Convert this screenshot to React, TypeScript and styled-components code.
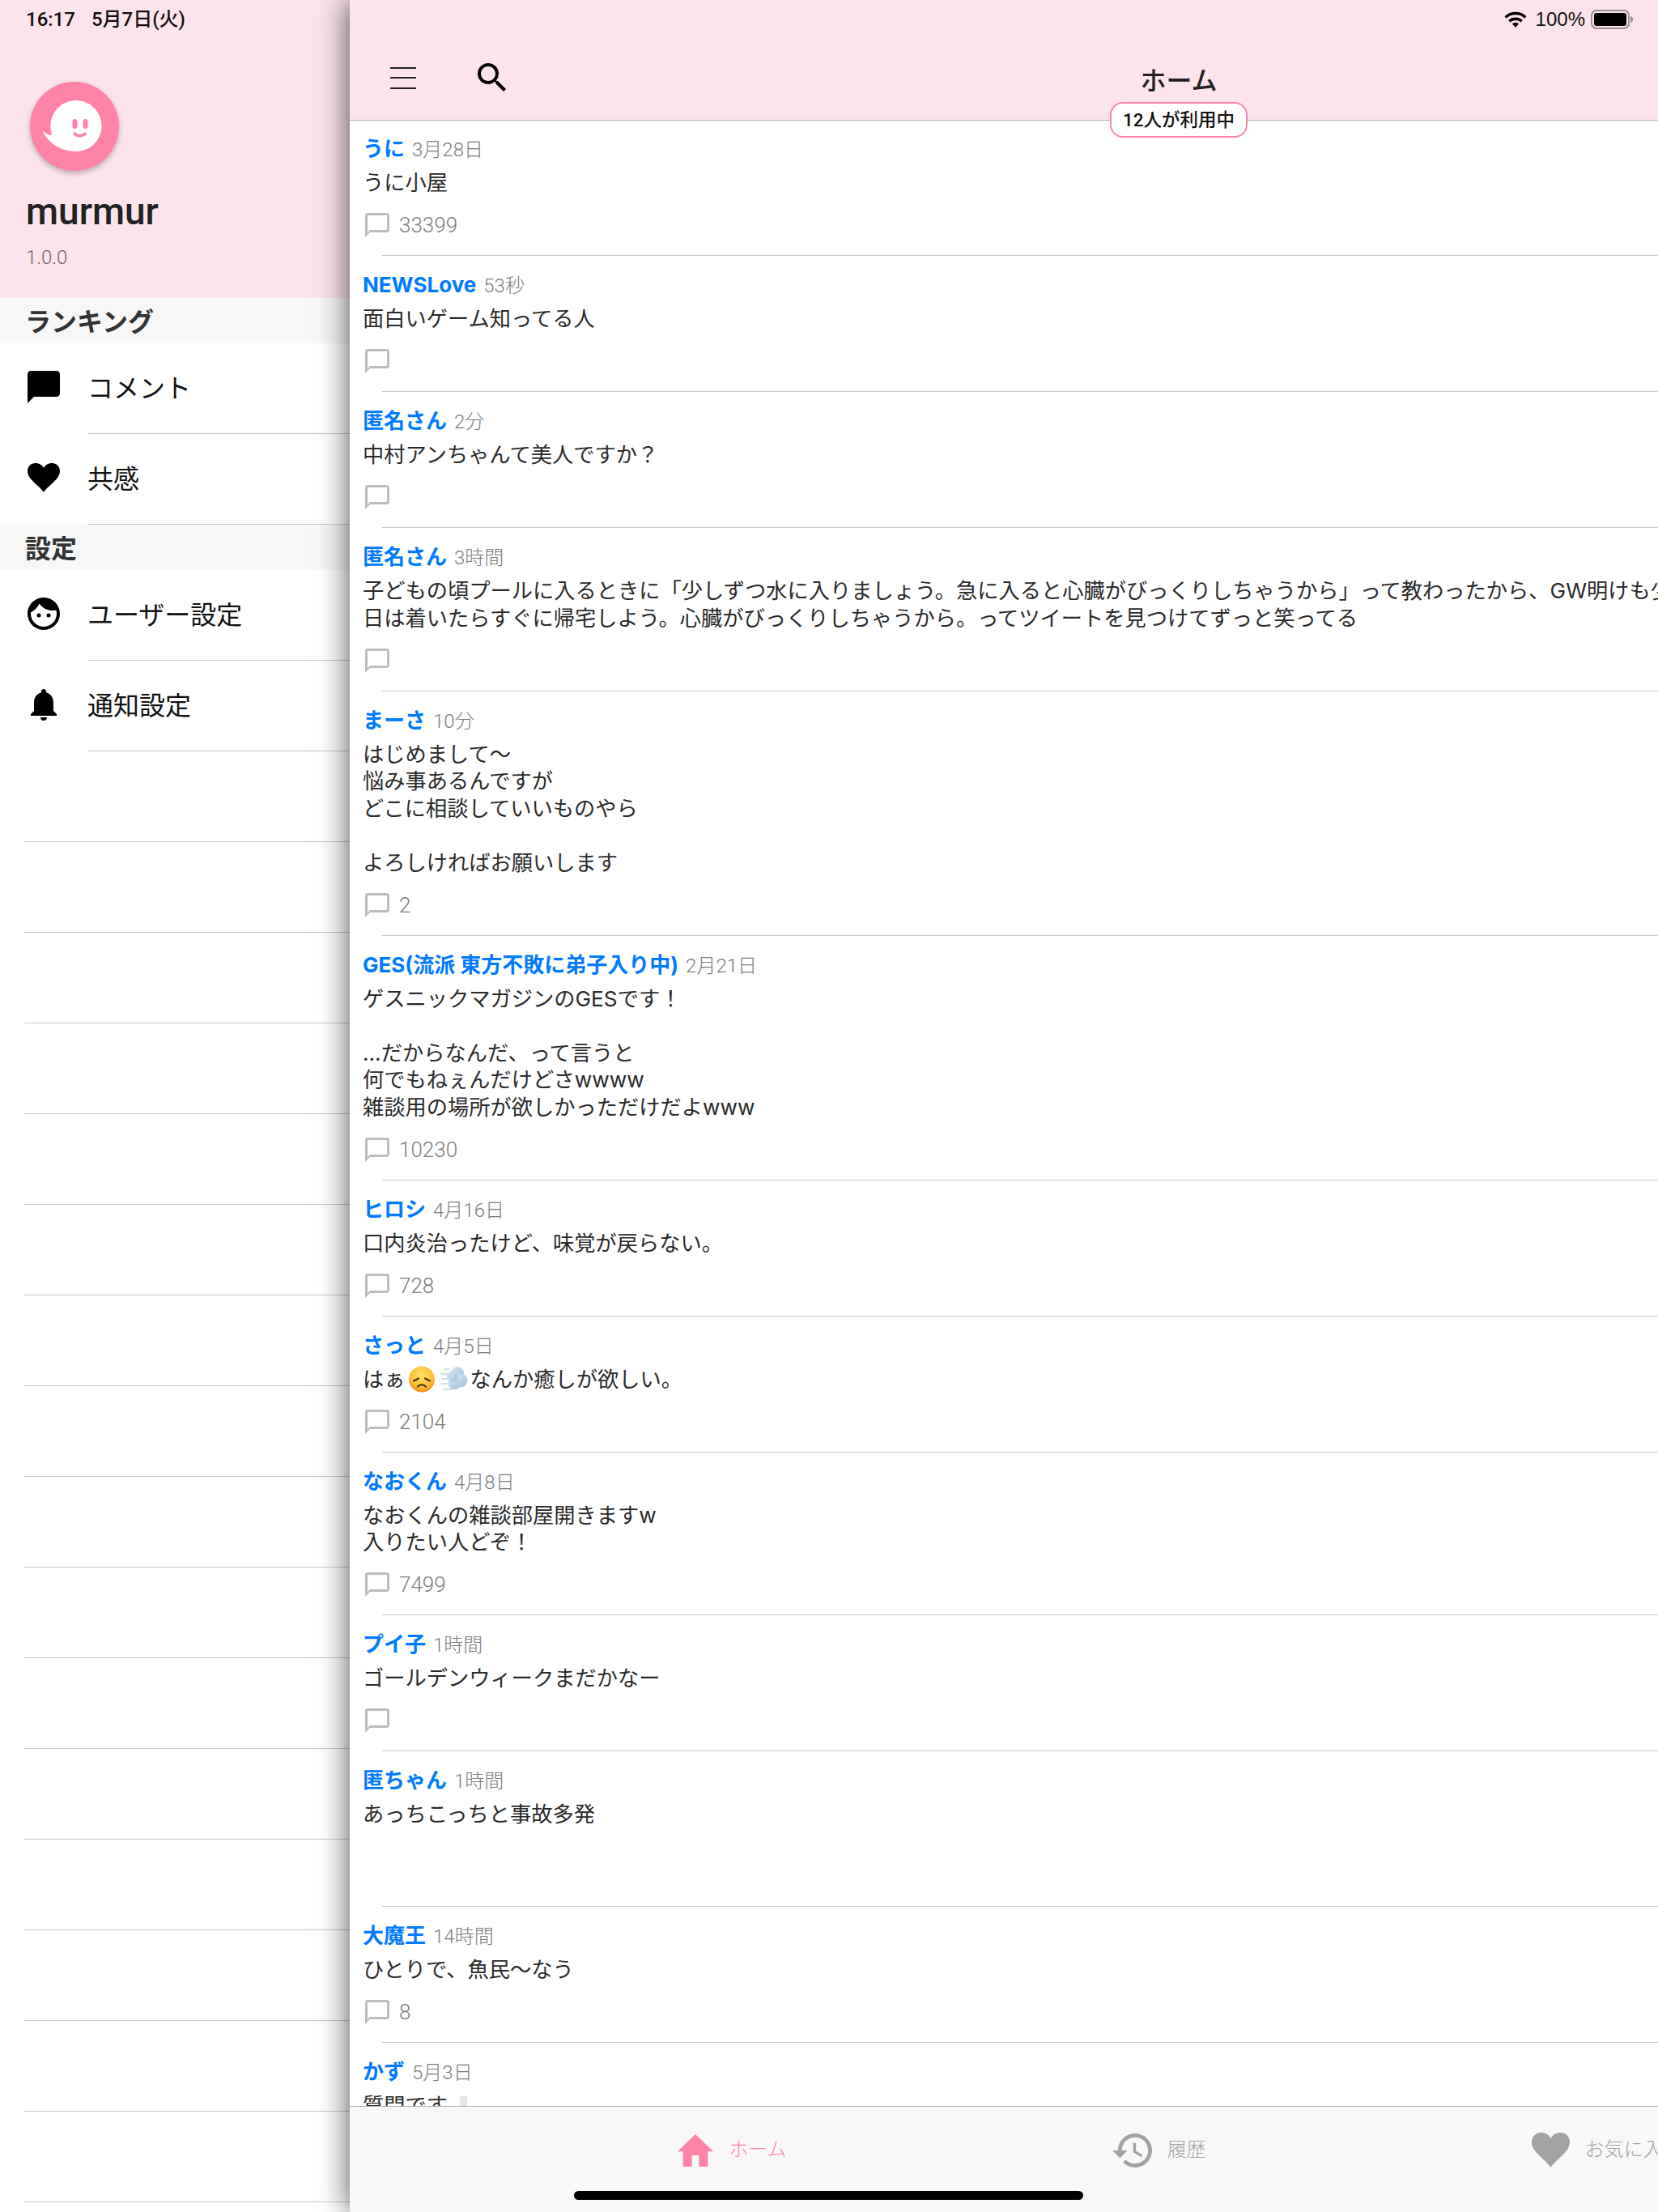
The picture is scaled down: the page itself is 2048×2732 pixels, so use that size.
import React from "react";
import styled, { createGlobalStyle } from "styled-components";
import { MdChatBubble, MdChatBubbleOutline, MdFace, MdNotifications, MdSearch } from "react-icons/md";

const CJK = `"Noto Sans CJK JP", sans-serif`;
const PINK = "#ff82a9";
const BLUSH = "#fbe4ec";

const Global = createGlobalStyle`
  html, body { margin: 0; padding: 0; background: #fff; }
  body { font-family: "Liberation Sans", ${CJK}; }
`;

const Screen = styled.div`
  position: relative;
  display: flex;
  width: 2048px;
  height: 2732px;
  overflow: hidden;
`;

/* ---------- drawer ---------- */
const Drawer = styled.aside`
  flex: none;
  width: 432px;
  height: 2732px;
  overflow: hidden;
  background: #fff;
`;
const DrawerHead = styled.header`
  height: 368px;
  padding: 0 32px;
  box-sizing: border-box;
  background: ${BLUSH};
`;
const Clock = styled.div`
  display: flex;
  gap: 20px;
  height: 48px;
  font: 500 24px/48px Roboto, ${CJK};
  color: #111;
`;
const Avatar = styled.svg`
  display: block;
  width: 110px;
  height: 110px;
  margin: 53px 0 0 5px;
  overflow: visible;
  filter: drop-shadow(0 3px 3px rgba(0, 0, 0, 0.25));
`;
const AppName = styled.div`
  margin-top: 23px;
  font: 500 46px/54px Roboto, sans-serif;
  color: #222;
`;
const Version = styled.div`
  margin-top: 14px;
  font: 300 24px/32px Roboto, sans-serif;
  color: #6f666a;
`;
const SectionTitle = styled.div`
  height: 56px;
  padding-left: 31px;
  background: #f7f7f7;
  font: 700 32px/54px ${CJK};
  color: #333;
`;
const MenuRow = styled.div`
  display: flex;
  align-items: center;
  height: 112px;
  padding-left: 30px;
`;
const MenuIcon = styled.span`
  flex: none;
  display: flex;
  align-items: center;
  justify-content: center;
  width: 48px;
  height: 48px;
  margin-bottom: 4px;
  color: #000;
`;
const MenuLabel = styled.div`
  flex: 1;
  height: 112px;
  margin-left: 30px;
  box-sizing: border-box;
  border-bottom: 1px solid #c8c8c8;
  font: 400 32px/106px ${CJK};
  color: #111;
`;
const EmptyRow = styled.div`
  height: 112px;
  margin-left: 30px;
  box-sizing: border-box;
  border-bottom: 1px solid #c8c8c8;
`;

/* ---------- main ---------- */
const Main = styled.main`
  position: relative;
  z-index: 1;
  flex: none;
  display: flex;
  flex-direction: column;
  width: 2048px;
  height: 2732px;
  background: #fff;
  box-shadow: 0 0 36px rgba(0, 0, 0, 0.7);
`;
const Header = styled.header`
  position: relative;
  z-index: 2;
  flex: none;
  height: 149px;
  box-sizing: border-box;
  background: ${BLUSH};
  border-bottom: 1px solid #b0b0b0;
`;
const StatusRow = styled.div`
  display: flex;
  align-items: center;
  justify-content: flex-end;
  width: 1616px;
  height: 48px;
  padding-right: 30px;
  box-sizing: border-box;
  font: 400 24px/48px "Liberation Sans", sans-serif;
  color: #111;
`;
const Percent = styled.span`
  margin: 0 7px 0 11px;
`;
const NavRow = styled.div`
  display: grid;
  grid-template-columns: 1fr auto 1fr;
  align-items: center;
  height: 100px;
  padding-bottom: 4px;
  box-sizing: border-box;
`;
const NavTools = styled.div`
  display: flex;
  align-items: center;
  gap: 70px;
  padding-left: 50px;
`;
const Burger = styled.div`
  display: flex;
  flex-direction: column;
  gap: 10.5px;
  width: 32px;
`;
const BurgerLine = styled.span`
  display: block;
  height: 2px;
  background: #222;
`;
const Title = styled.h1`
  margin: 2px 0 0;
  font: 500 32px/40px ${CJK};
  color: #222;
`;
const Badge = styled.div`
  position: absolute;
  left: 50%;
  top: 126px;
  transform: translateX(-50%);
  width: 170px;
  height: 44px;
  box-sizing: border-box;
  border: 2px solid ${PINK};
  border-radius: 16px;
  background: #fff;
  text-align: center;
  font: 500 22.5px/40px Roboto, ${CJK};
  color: #111;
`;
const Feed = styled.div`
  flex: 1;
  min-height: 0;
  margin-top: -1px;
  overflow: hidden;
`;
const Item = styled.article`
  padding: 19px 0 0 16px;
  &::after {
    content: "";
    display: block;
    margin: 19px 0 0 24px;
    border-bottom: 1px solid #c8c8c8;
  }
`;
const NameRow = styled.div`
  display: flex;
  align-items: baseline;
  gap: 9px;
  height: 34px;
  line-height: 34px;
`;
const Name = styled.span`
  font: 700 26px/34px Inter, ${CJK};
  color: #007aff;
`;
const When = styled.span`
  font: 300 24px/34px Roboto, ${CJK};
  color: #7d7d7d;
`;
const Body = styled.div`
  margin-top: 8px;
  white-space: pre;
  font: 400 26.25px/33.5px Inter, ${CJK};
  color: #2a2a2a;
`;
const Footer = styled.div`
  display: flex;
  align-items: center;
  gap: 9px;
  height: 36px;
  margin-top: 17.5px;
  color: #bdbdbd;
`;
const Count = styled.span`
  font: 300 26px/36px Roboto, sans-serif;
  color: #7d7d7d;
`;
const NoFooter = styled.div`
  height: 77.5px;
`;
const EmojiBox = styled.span`
  display: inline-block;
  width: 40px;
  height: 33.5px;
  vertical-align: top;
  text-align: center;
`;
const EmojiArt = styled.svg`
  width: 34px;
  height: 33px;
`;
const PaleMark = styled.span`
  display: inline-block;
  width: 9px;
  height: 24px;
  margin-left: 15px;
  background: #e6e6e6;
  vertical-align: -3px;
`;

/* ---------- tab bar ---------- */
const TabBar = styled.nav`
  flex: none;
  display: flex;
  justify-content: space-evenly;
  align-items: flex-start;
  height: 131px;
  padding: 29px 0 0 3px;
  box-sizing: border-box;
  background: #f8f8f8;
  border-top: 1px solid #b0b0b0;
  position: relative;
  z-index: 1;
`;
const Tab = styled.div<{ $active?: boolean }>`
  display: flex;
  align-items: center;
  gap: 19px;
  color: ${(p) => (p.$active ? PINK : "#a2a2a2")};
  font: 300 24px/44px ${CJK};
  white-space: nowrap;
`;
const TabLabel = styled.span`
  padding-bottom: 5px;
`;
const HomeBar = styled.div`
  position: absolute;
  z-index: 3;
  left: 709px;
  bottom: 15px;
  width: 629px;
  height: 11px;
  border-radius: 6px;
  background: #000;
`;

const Heart = ({ w, h }: { w: number; h: number }) => (
  <svg width={w} height={h} viewBox="0 0 40 36" preserveAspectRatio="none" fill="currentColor">
    <path d="M20 36C14 27 0 20 0 10 0 4 4 0 10 0c4 0 8 2 10 6 2-4 6-6 10-6 6 0 10 4 10 10 0 10-14 17-20 26z" />
  </svg>
);

const Wifi = () => (
  <svg width="28" height="20" viewBox="0 0 28 20" fill="none" stroke="#000" strokeWidth="3.4">
    <path d="M1.6 7.4C8.6.9 19.4.9 26.4 7.4" />
    <path d="M6.3 12.2c4.3-4 11.1-4 15.4 0" />
    <path d="M14 20l-4-4.6c2.3-1.9 5.7-1.9 8 0z" fill="#000" stroke="none" />
  </svg>
);

const Battery = () => (
  <svg width="53" height="24" viewBox="0 0 53 24">
    <rect x="1" y="1" width="46" height="22" rx="6" fill="none" stroke="#9b8c91" strokeWidth="2" />
    <rect x="4" y="4" width="40" height="16" rx="3" fill="#000" />
    <path d="M49 8c2 .4 3 2 3 4s-1 3.600-3 4z" fill="#9b8c91" />
  </svg>
);

const Logo = () => (
  <Avatar viewBox="0 0 110 110">
    <circle cx="55" cy="55" r="55" fill={PINK} />
    <path
      d="M57 23C74.500 23 88.500 37 88.500 54.500 88.500 72 74.500 86 57 86 40 86 24 78 15 60 19 64 24 66 27 66 26 62 25.500 58 25.500 54.500 25.500 37 39.500 23 57 23Z"
      fill="#fff"
    />
    <rect x="52.500" y="46" width="6" height="12" rx="3" fill={PINK} />
    <rect x="65.500" y="46" width="6" height="12" rx="3" fill={PINK} />
    <path d="M55 64c3 3.500 10 3.500 13.500 0" fill="none" stroke={PINK} strokeWidth="3.500" strokeLinecap="round" />
  </Avatar>
);

const SadFace = () => (
  <EmojiArt viewBox="0 0 34 33">
    <defs>
      <radialGradient id="sadFill" cx="50%" cy="35%" r="65%">
        <stop offset="0%" stopColor="#ffe36b" />
        <stop offset="70%" stopColor="#fdbd34" />
        <stop offset="100%" stopColor="#f5871f" />
      </radialGradient>
    </defs>
    <circle cx="17" cy="16.500" r="16" fill="url(#sadFill)" />
    <path d="M7 18.500l6-3M27 18.500l-6-3" stroke="#4a2b12" strokeWidth="2" strokeLinecap="round" />
    <path d="M12 25.500c2.500-3 7.500-3 10 0" fill="none" stroke="#4a2b12" strokeWidth="2" strokeLinecap="round" />
  </EmojiArt>
);

const Puff = () => (
  <EmojiArt viewBox="0 0 34 33">
    <defs>
      <linearGradient id="puffFill" x1="0" y1="0" x2="1" y2="1">
        <stop offset="0%" stopColor="#dbe9f1" />
        <stop offset="100%" stopColor="#9dbfd6" />
      </linearGradient>
    </defs>
    <g fill="url(#puffFill)">
      <circle cx="21" cy="9" r="8" />
      <circle cx="25" cy="18" r="8.500" />
      <circle cx="17" cy="22" r="7.500" />
      <circle cx="15" cy="13" r="7" />
    </g>
    <path d="M0 10h9M2 16h8M1 22h9M4 29h13M5 4h6" stroke="#cfe0ea" strokeWidth="1.800" strokeLinecap="round" />
  </EmojiArt>
);

type Post = { name: string; when: string; body: React.ReactNode; count?: string; noFooter?: boolean };

const posts: Post[] = [
  { name: "うに", when: "3月28日", body: "うに小屋", count: "33399" },
  { name: "NEWSLove", when: "53秒", body: "面白いゲーム知ってる人" },
  { name: "匿名さん", when: "2分", body: "中村アンちゃんて美人ですか？" },
  {
    name: "匿名さん",
    when: "3時間",
    body: "子どもの頃プールに入るときに「少しずつ水に入りましょう。急に入ると心臓がびっくりしちゃうから」って教わったから、GW明けも少\n日は着いたらすぐに帰宅しよう。心臓がびっくりしちゃうから。ってツイートを見つけてずっと笑ってる",
  },
  {
    name: "まーさ",
    when: "10分",
    body: "はじめまして〜\n悩み事あるんですが\nどこに相談していいものやら\n\nよろしければお願いします",
    count: "2",
  },
  {
    name: "GES(流派 東方不敗に弟子入り中)",
    when: "2月21日",
    body: "ゲスニックマガジンのGESです！\n\n...だからなんだ、って言うと\n何でもねぇんだけどさwwww\n雑談用の場所が欲しかっただけだよwww",
    count: "10230",
  },
  { name: "ヒロシ", when: "4月16日", body: "口内炎治ったけど、味覚が戻らない。", count: "728" },
  {
    name: "さっと",
    when: "4月5日",
    body: (
      <>
        はぁ
        <EmojiBox>
          <SadFace />
        </EmojiBox>
        <EmojiBox>
          <Puff />
        </EmojiBox>
        なんか癒しが欲しい。
      </>
    ),
    count: "2104",
  },
  { name: "なおくん", when: "4月8日", body: "なおくんの雑談部屋開きますw\n入りたい人どぞ！", count: "7499" },
  { name: "プイ子", when: "1時間", body: "ゴールデンウィークまだかなー" },
  { name: "匿ちゃん", when: "1時間", body: "あっちこっちと事故多発", noFooter: true },
  { name: "大魔王", when: "14時間", body: "ひとりで、魚民〜なう", count: "8" },
  {
    name: "かず",
    when: "5月3日",
    body: (
      <>
        質問です
        <PaleMark />
      </>
    ),
  },
];

export default function App() {
  return (
    <>
      <Global />
      <Screen>
        <Drawer>
          <DrawerHead>
            <Clock>
              <span>16:17</span>
              <span>5月7日(火)</span>
            </Clock>
            <Logo />
            <AppName>murmur</AppName>
            <Version>1.0.0</Version>
          </DrawerHead>
          <SectionTitle>ランキング</SectionTitle>
          <MenuRow>
            <MenuIcon>
              <MdChatBubble size={48} />
            </MenuIcon>
            <MenuLabel>コメント</MenuLabel>
          </MenuRow>
          <MenuRow>
            <MenuIcon>
              <Heart w={40} h={36} />
            </MenuIcon>
            <MenuLabel>共感</MenuLabel>
          </MenuRow>
          <SectionTitle>設定</SectionTitle>
          <MenuRow>
            <MenuIcon>
              <MdFace size={48} />
            </MenuIcon>
            <MenuLabel>ユーザー設定</MenuLabel>
          </MenuRow>
          <MenuRow>
            <MenuIcon>
              <MdNotifications size={48} />
            </MenuIcon>
            <MenuLabel>通知設定</MenuLabel>
          </MenuRow>
          {Array.from({ length: 16 }, (_, i) => (
            <EmptyRow key={i} />
          ))}
        </Drawer>

        <Main>
          <Header>
            <StatusRow>
              <Wifi />
              <Percent>100%</Percent>
              <Battery />
            </StatusRow>
            <NavRow>
              <NavTools>
                <Burger>
                  <BurgerLine />
                  <BurgerLine />
                  <BurgerLine />
                </Burger>
                <MdSearch size={48} color="#000" />
              </NavTools>
              <Title>ホーム</Title>
            </NavRow>
            <Badge>12人が利用中</Badge>
          </Header>
          <Feed>
            {posts.map((p, i) => (
              <Item key={i}>
                <NameRow>
                  <Name>{p.name}</Name>
                  <When>{p.when}</When>
                </NameRow>
                <Body>{p.body}</Body>
                {p.noFooter ? (
                  <NoFooter />
                ) : (
                  <Footer>
                    <MdChatBubbleOutline size={36} />
                    {p.count && <Count>{p.count}</Count>}
                  </Footer>
                )}
              </Item>
            ))}
          </Feed>
          <TabBar>
            <Tab $active>
              <svg width="44" height="40" viewBox="2 3 20 17" preserveAspectRatio="none" fill="currentColor">
                <path d="M10 20v-6h4v6h5v-8h3L12 3 2 12h3v8z" />
              </svg>
              <TabLabel>ホーム</TabLabel>
            </Tab>
            <Tab>
              <svg width="49" height="42" viewBox="1 3 21 18" preserveAspectRatio="none" fill="currentColor">
                <path d="M13 3c-4.970 0-9 4.030-9 9H1l3.890 3.890.07.14L9 12H6c0-3.870 3.130-7 7-7s7 3.130 7 7-3.130 7-7 7c-1.930 0-3.680-.79-4.940-2.060l-1.420 1.420C8.270 19.990 10.510 21 13 21c4.970 0 9-4.030 9-9s-4.030-9-9-9zm-1 5v5l4.280 2.540.72-1.210-3.500-2.080V8H12z" />
              </svg>
              <TabLabel>履歴</TabLabel>
            </Tab>
            <Tab>
              <Heart w={47} h={43} />
              <TabLabel>お気に入り</TabLabel>
            </Tab>
          </TabBar>
        </Main>
        <HomeBar />
      </Screen>
    </>
  );
}
